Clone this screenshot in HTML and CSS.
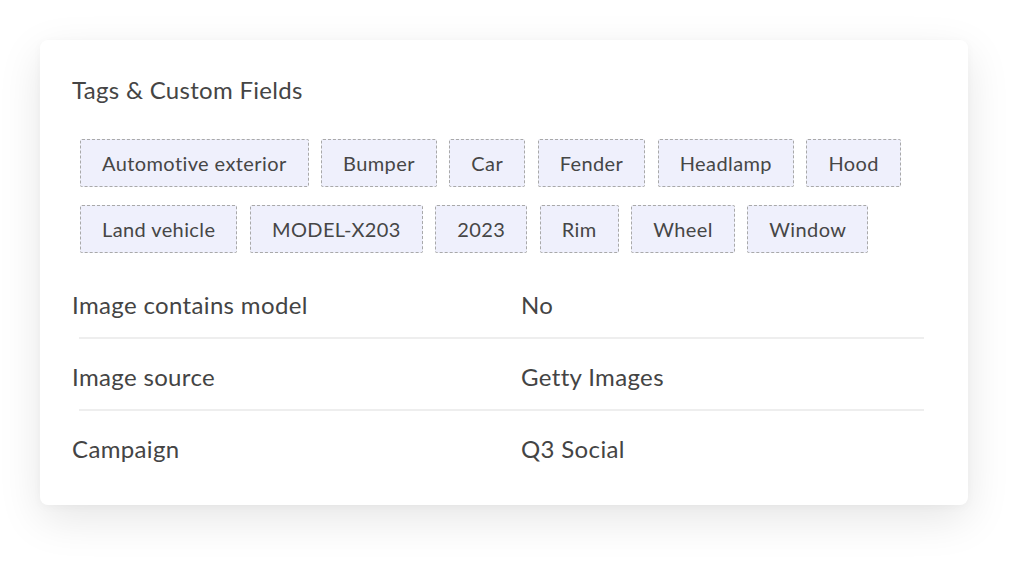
FILE: index.html
```html
<!DOCTYPE html>
<html lang="en">
<head>
<meta charset="utf-8">
<title>Tags &amp; Custom Fields</title>
<link rel="stylesheet" href="styles.css">
</head>
<body>
<div class="page">
  <section class="card">
    <h2 class="title">Tags &amp; Custom Fields</h2>
    <ul class="tags">
      <li class="tag">Automotive exterior</li>
      <li class="tag">Bumper</li>
      <li class="tag">Car</li>
      <li class="tag">Fender</li>
      <li class="tag">Headlamp</li>
      <li class="tag">Hood</li>
      <li class="tag">Land vehicle</li>
      <li class="tag">MODEL-X203</li>
      <li class="tag">2023</li>
      <li class="tag">Rim</li>
      <li class="tag">Wheel</li>
      <li class="tag">Window</li>
    </ul>
    <div class="fields">
      <div class="field">
        <span class="label">Image contains model</span>
        <span class="value">No</span>
      </div>
      <div class="divider"></div>
      <div class="field">
        <span class="label">Image source</span>
        <span class="value">Getty Images</span>
      </div>
      <div class="divider"></div>
      <div class="field">
        <span class="label">Campaign</span>
        <span class="value">Q3 Social</span>
      </div>
    </div>
  </section>
</div>
</body>
</html>
```
FILE: styles.css
```css
* { box-sizing: border-box; }
html, body { margin: 0; padding: 0; background: #ffffff; }
body {
  font-family: "Lato", "Noto Sans", sans-serif;
  color: #444444;
}
.page {
  padding: 40px 60px 61px 40px;
}
.card {
  width: 928px;
  height: 465px;
  background: #ffffff;
  border-radius: 8px;
  box-shadow: 0 14px 44px rgba(0, 0, 0, 0.10), 0 2px 10px rgba(0, 0, 0, 0.03);
  padding: 35px 32px 22px 32px;
}
.title {
  margin: 0;
  font-size: 24px;
  line-height: 30px;
  font-weight: 400;
  letter-spacing: 0.3px;
  color: #454545;
}
.tags {
  list-style: none;
  margin: 34px 0 14px 8px;
  padding: 0;
  display: flex;
  flex-wrap: wrap;
  column-gap: 12.5px;
  row-gap: 18px;
  width: 830px;
}
.tag {
  height: 48px;
  padding: 0 21px;
  display: flex;
  align-items: center;
  background: #eff0fc;
  border: 1px dashed #a9a9a9;
  border-radius: 2px;
  font-size: 20px;
  letter-spacing: 0.4px;
  color: #464646;
}
.field {
  display: flex;
  font-size: 24px;
  line-height: 28px;
  letter-spacing: 0.35px;
  padding: 24px 0 18px 0;
}
.label { width: 449px; }
.divider {
  height: 2px;
  background: #eeeeee;
  margin: 0 12px 0 7px;
}
```
